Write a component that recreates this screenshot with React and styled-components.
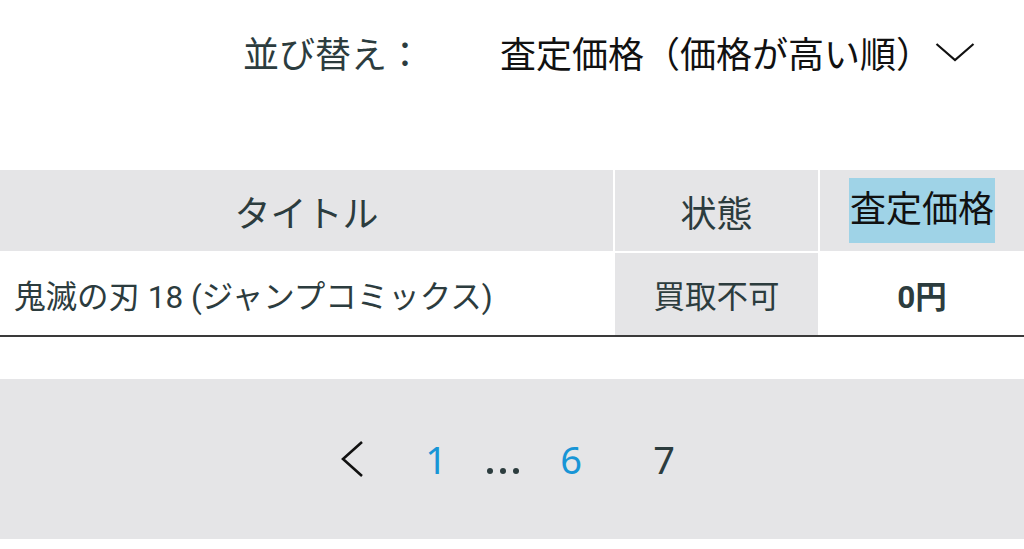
import React from 'react';
import styled, { createGlobalStyle } from 'styled-components';

const ink = '#2c3c3e';
const grey = '#e5e5e7';
const blue = '#1895d6';

const GlobalStyle = createGlobalStyle`
    html, body {
        margin: 0;
        padding: 0;
        background: #fff;
    }

    body {
        font-family: Roboto, "Noto Sans CJK JP", sans-serif;
        color: ${ink};
    }
`;

const Page = styled.div`
    width: 1024px;
    height: 549px;
    overflow: hidden;
    background: #fff;
`;

const SortBar = styled.div`
    display: flex;
    align-items: center;
    height: 104px;
    padding-left: 243px;
    margin-bottom: 66px;
`;

const SortLabel = styled.span`
    font-size: 36px;
    color: ${ink};
    margin-right: 77px;
    white-space: nowrap;
`;

const SortValue = styled.span`
    font-size: 36px;
    color: #111;
    white-space: nowrap;
`;

const Chevron = styled.svg`
    margin-left: 3px;
    width: 40px;
    height: 20px;
    flex-shrink: 0;
`;

const Table = styled.div`
    display: grid;
    grid-template-columns: 613px 203px 1fr;
    column-gap: 2px;
    row-gap: 2px;
    border-bottom: 2px solid #3a3a3a;
`;

const HeadCell = styled.div`
    display: flex;
    align-items: center;
    justify-content: center;
    height: 81px;
    background: ${grey};
    font-size: 36px;
    color: ${ink};
`;

const Selected = styled.span`
    display: inline-block;
    line-height: 65px;
    padding: 0 1px;
    background: #9fd3e7;
    color: #111;
`;

const Cell = styled.div`
    display: flex;
    align-items: center;
    justify-content: ${p => (p.$left ? 'flex-start' : 'center')};
    height: 82px;
    padding-left: ${p => (p.$left ? '14px' : '0')};
    background: ${p => (p.$shaded ? grey : '#fff')};
    font-size: 31.5px;
    font-weight: ${p => (p.$bold ? 700 : 400)};
    color: ${ink};
    white-space: nowrap;
`;

const Pager = styled.nav`
    display: flex;
    align-items: center;
    justify-content: center;
    height: 160px;
    margin-top: 42px;
    background: ${grey};
`;

const PageItem = styled.span`
    display: flex;
    align-items: center;
    justify-content: center;
    width: ${p => p.$w}px;
    font-family: "Noto Sans", "Open Sans", sans-serif;
    font-size: 38px;
    color: ${p => (p.$active ? blue : ink)};
`;

const Dots = styled.span`
    display: flex;
    align-items: flex-end;
    gap: 7px;
    height: 30px;
`;

const Dot = styled.i`
    width: 6px;
    height: 6px;
    border-radius: 50%;
    background: ${ink};
`;

export default function App() {
    return (
        <Page>
            <GlobalStyle />
            <SortBar>
                <SortLabel>並び替え：</SortLabel>
                <SortValue>査定価格（価格が高い順）</SortValue>
                <Chevron viewBox="0 0 40 20">
                    <path d="M1.5 2 L20 18 L38.5 2" fill="none" stroke="#111" strokeWidth="2.2" />
                </Chevron>
            </SortBar>

            <Table>
                <HeadCell>タイトル</HeadCell>
                <HeadCell>状態</HeadCell>
                <HeadCell><Selected>査定価格</Selected></HeadCell>

                <Cell $left>鬼滅の刃 18 (ジャンプコミックス)</Cell>
                <Cell $shaded>買取不可</Cell>
                <Cell $bold>0円</Cell>
            </Table>

            <Pager>
                <PageItem $w={84}>
                    <svg width="26" height="38" viewBox="0 0 26 38">
                        <path d="M23 2 L4 19 L23 36" fill="none" stroke="#111" strokeWidth="2.6" />
                    </svg>
                </PageItem>
                <PageItem $w={84} $active>1</PageItem>
                <PageItem $w={50}>
                    <Dots><Dot /><Dot /><Dot /></Dots>
                </PageItem>
                <PageItem $w={86} $active>6</PageItem>
                <PageItem $w={100}>7</PageItem>
            </Pager>
        </Page>
    );
}
